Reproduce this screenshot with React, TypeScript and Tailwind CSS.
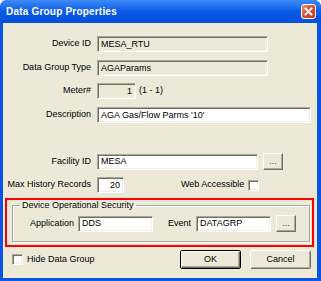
import React from 'react'

const sunken =
  'border border-t-[#ACA899] border-l-[#ACA899] border-b-white border-r-white shadow-[inset_1px_1px_0_#716F64,inset_-1px_-1px_0_#F1EFE2]'
const raised =
  'border border-t-white border-l-white border-b-[#716F64] border-r-[#716F64] shadow-[inset_-1px_-1px_0_#ACA899] bg-[#ECE9D8]'

function Field({ value, className, disabled, right }: { value: string; className: string; disabled?: boolean; right?: boolean }) {
  return (
    <div
      className={`h-[16px] flex items-center px-[3px] ${sunken} ${disabled ? 'bg-[#ECE9D8]' : 'bg-white'} ${right ? 'justify-end' : ''} ${className}`}
    >
      <span className="leading-none whitespace-nowrap">{value}</span>
    </div>
  )
}

function Check() {
  return <div className={`w-[11px] h-[11px] shrink-0 bg-white ${sunken}`} />
}

function Dots() {
  return (
    <div className={`w-[20px] h-[17px] flex items-center justify-center ${raised}`}>
      <span className="leading-none text-[#444] -mt-[1px]">...</span>
    </div>
  )
}

function Row({ label, children, className = '' }: { label: string; children: React.ReactNode; className?: string }) {
  return (
    <div className={`flex items-center h-[16px] ${className}`}>
      <div className="w-[88px] shrink-0 text-right whitespace-nowrap">{label}</div>
      <div className="ml-[6px] flex items-center">{children}</div>
    </div>
  )
}

export default function App() {
  return (
    <div className="w-[321px] h-[281px] bg-[#0A54E0] rounded-t-[7px] flex flex-col overflow-hidden font-['Liberation_Sans',Arial,sans-serif] text-[9px] text-black">
      <div className="h-[23px] shrink-0 flex items-center pl-[6px] pr-[5px] bg-gradient-to-b from-[#3D8BF6] via-[#0A5AE8] to-[#0550D8]">
        <span className="text-white font-bold text-[10px] tracking-[0.2px]">Data Group Properties</span>
        <div className="ml-auto w-[15px] h-[15px] rounded-[3px] border border-white bg-gradient-to-br from-[#E98B6D] via-[#DB4E2B] to-[#C23A18] flex items-center justify-center">
          <svg width="9" height="9" viewBox="0 0 9 9">
            <path d="M1.5 1.5 L7.5 7.5 M7.5 1.5 L1.5 7.5" stroke="white" strokeWidth="1.8" strokeLinecap="square" />
          </svg>
        </div>
      </div>

      <div className="ml-[3px] mr-[4px] mb-[3px] flex-1 bg-[#ECE9D8] flex flex-col">
        <Row label="Device ID" className="mt-[13px]">
          <Field value="MESA_RTU" disabled className="w-[171px]" />
        </Row>
        <Row label="Data Group Type" className="mt-[8px]">
          <Field value="AGAParams" disabled className="w-[171px]" />
        </Row>
        <Row label="Meter#" className="mt-[7px]">
          <Field value="1" disabled right className="w-[39px]" />
          <span className="ml-[3px]">(1 - 1)</span>
        </Row>
        <Row label="Description" className="mt-[8px]">
          <Field value="AGA Gas/Flow Parms '10'" className="w-[214px]" />
        </Row>
        <Row label="Facility ID" className="mt-[30px] h-[17px]">
          <Field value="MESA" className="w-[161px]" />
          <div className="ml-[5px]">
            <Dots />
          </div>
        </Row>
        <div className="flex items-center h-[16px] mt-[7px]">
          <div className="w-[88px] shrink-0 text-right whitespace-nowrap">Max History Records</div>
          <Field value="20" right className="ml-[6px] w-[27px] shrink-0" />
          <div className="ml-[57px] w-[62px] shrink-0 text-right whitespace-nowrap">Web Accessible</div>
          <div className="ml-[5px]">
            <Check />
          </div>
        </div>

        <div className="mt-[5px] ml-[2px] w-[309px] h-[49px] border-2 border-[#FF0000] flex flex-col">
          <fieldset className="ml-[5px] w-[298px] h-[42px] border border-[#ACA899] shadow-[inset_1px_1px_0_#fff,1px_1px_0_#fff]">
            <legend className="ml-[7px] px-[2px] leading-[11px]">Device Operational Security</legend>
            <div className="flex items-center h-[17px] mt-[4px]">
              <div className="ml-[17px] w-[48px]">Application</div>
              <Field value="DDS" className="w-[75px]" />
              <div className="ml-[15px] w-[28px]">Event</div>
              <Field value="DATAGRP" className="w-[75px]" />
              <div className="ml-[5px]">
                <Dots />
              </div>
            </div>
          </fieldset>
        </div>

        <div className="mt-[3px] flex items-center h-[19px]">
          <div className="ml-[9px]">
            <Check />
          </div>
          <span className="ml-[4px]">Hide Data Group</span>
          <div className="ml-auto w-[61px] h-[19px] border border-black rounded-[2px] flex">
            <div className={`flex-1 flex items-center justify-center ${raised}`}>OK</div>
          </div>
          <div className={`ml-[9px] mr-[6px] w-[61px] h-[19px] rounded-[2px] flex items-center justify-center ${raised}`}>
            Cancel
          </div>
        </div>
      </div>
    </div>
  )
}
